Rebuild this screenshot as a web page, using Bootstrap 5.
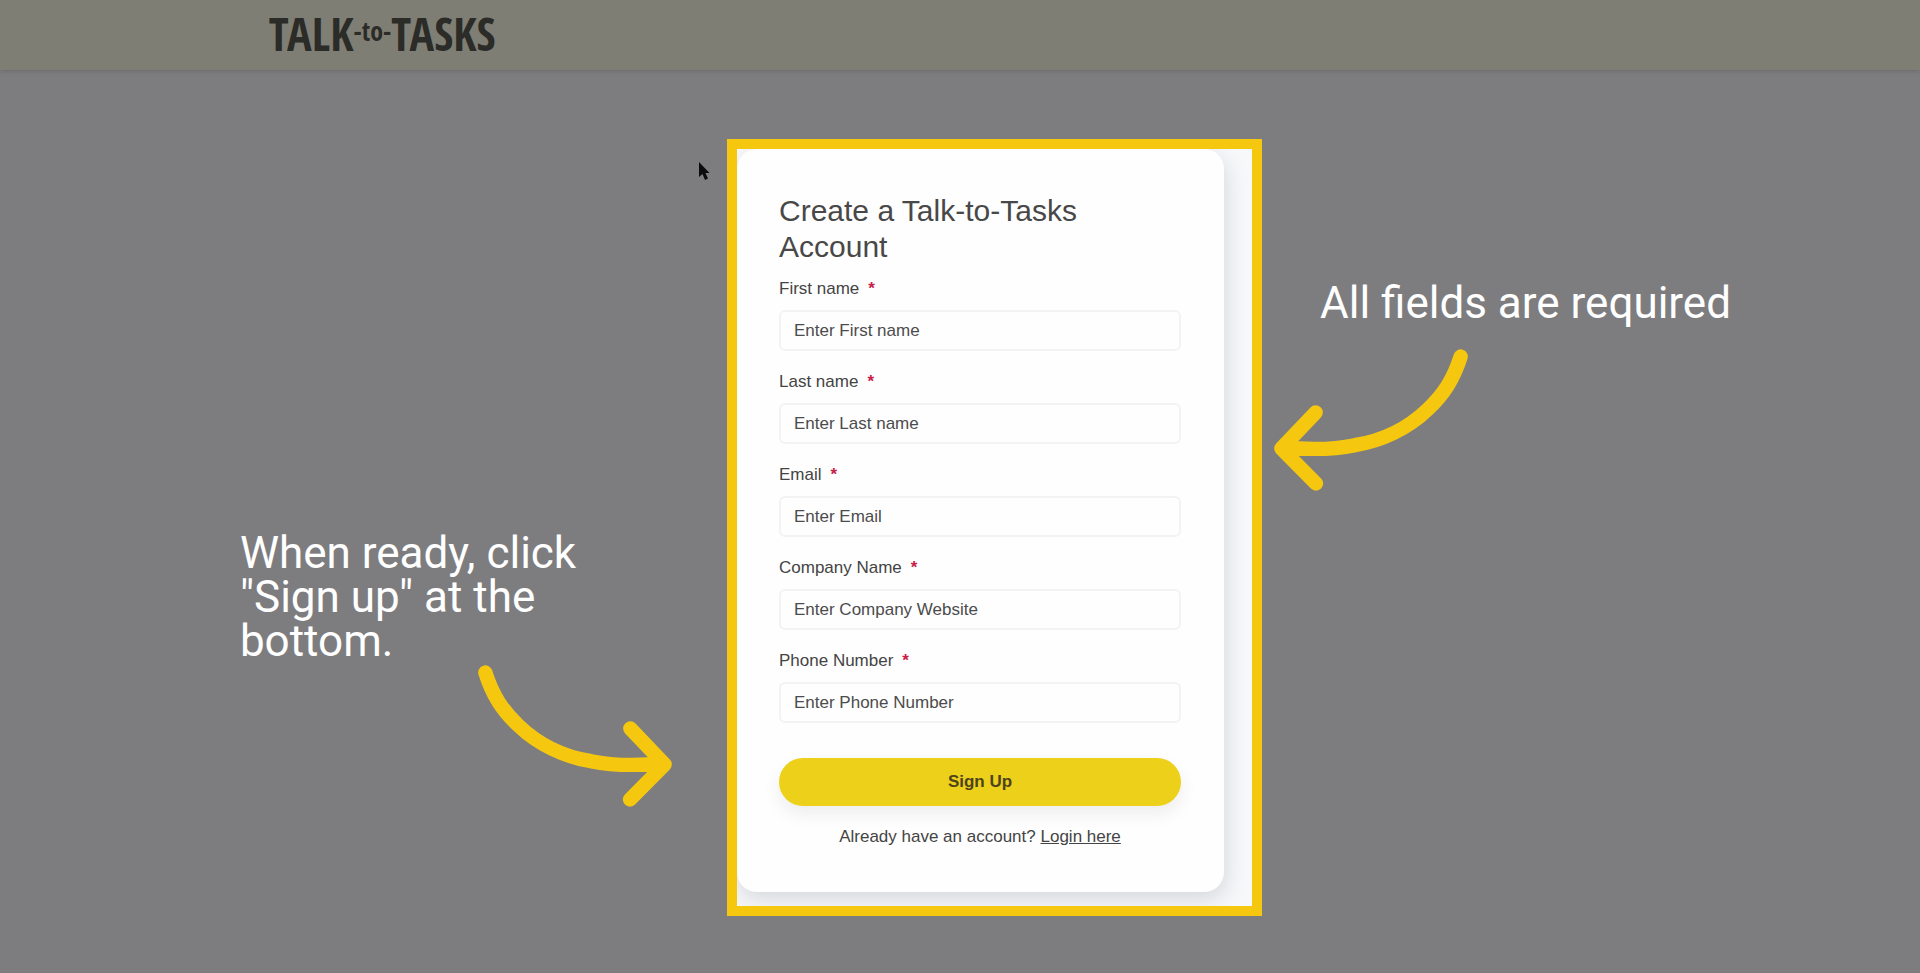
<!DOCTYPE html>
<html lang="en">
<head>
<meta charset="utf-8">
<meta name="viewport" content="width=device-width, initial-scale=1">
<title>Talk-to-Tasks – Create an account</title>
<link href="https://cdn.jsdelivr.net/npm/bootstrap@5.3.0/dist/css/bootstrap.min.css" rel="stylesheet">
<style>
  :root { --sun: #f5c80f; }
  body { background: #7d7d7f; font-family: "Liberation Sans", Arial, sans-serif; }
  .site-bar { height: 70px; padding: 0 14%; background: #7f7e74; box-shadow: 0 1px 4px rgba(90,90,90,.5); }
  .site-logo { font-family: "Open Sans Condensed", "Liberation Sans Narrow", sans-serif; font-weight: 700; font-size: 46px; line-height: 1; color: #2b2b28; }
  .site-logo:hover { color: #2b2b28; }
  .site-logo span { font-size: 26px; line-height: 1; margin-bottom: 4px; }
  .stage { display: grid; grid-template-columns: minmax(0, 727fr) 535px minmax(0, 658fr); padding: 69px 0 57px; }
  .spot { border: 10px solid var(--sun); background: #f7f8fa; padding-bottom: 14px; overflow: hidden; }
  .signup { width: 487px; padding: 44px 43px 42px 42px; background: #fefefe; border: 0; border-radius: 20px; box-shadow: 2px 8px 22px rgba(30,30,50,.14); color: #444; }
  .signup h1 { font-size: 30px; line-height: 36px; font-weight: 400; margin-bottom: 11px; color: #484848; }
  .signup label, .signup p { font-size: 17px; line-height: 26px; }
  .signup label { margin-bottom: 8px; }
  .signup .star { color: #c92048; margin-left: 9px; font-weight: 700; }
  .signup .form-control { height: 41px; padding: 0 13px; font-size: 17px; border: 2px solid #f3f3f3; border-radius: 6px; background: #fefefe; }
  .signup .form-control::placeholder { color: #4c4c4c; opacity: 1; }
  .fields { display: grid; gap: 18px; margin-bottom: 35px; }
  .btn-sun { height: 48px; padding: 0; font-size: 17px; font-weight: 700; color: #4d431c; background: #edd01a; border: 0; box-shadow: 0 8px 18px rgba(0,0,0,.07); margin-bottom: 18px; }
  .signup a { color: #444; }
  .note { font-family: Roboto, sans-serif; font-size: 44px; line-height: 44px; color: #fff; }
  .note-left { padding: 392px 55px 0 33%; }
  .note-left .note { margin-bottom: 2px; }
  .note-right { padding: 142px 0 0 12px; }
  .note-right .note { padding-left: 46px; margin-bottom: 24px; }
  .arrow { width: 194px; height: 142px; fill: none; stroke: var(--sun); stroke-width: 43; stroke-linecap: round; stroke-linejoin: round; }
  .pointer { top: 21px; right: 16px; width: 14px; height: 22px; }
</style>
</head>
<body class="min-vh-100">
<header class="site-bar d-flex align-items-center"><a class="site-logo d-flex align-items-center text-decoration-none pb-1" href="#">TALK<span>-to-</span>TASKS</a></header>
<main class="stage">
  <aside class="note-left position-relative d-flex flex-column">
    <svg class="pointer position-absolute" viewBox="0 0 14 22" aria-hidden="true"><path d="M2 2V17L5.500 14L8 20L11 18.500L8.500 13H12.500Z" fill="#0c0c0c"/></svg>
    <p class="note">When ready, click<br>"Sign up" at the<br>bottom.</p>
    <svg class="arrow align-self-end" viewBox="0 0 582 425" aria-hidden="true"><path d="M22 22C44 92 74 136 120 180C182 240 262 276 339 288C392 299 452 301 509 298M457 190L560 298L456 403"/></svg>
  </aside>
  <section class="spot">
    <form class="signup card">
      <h1>Create a Talk-to-Tasks Account</h1>
      <div class="fields">
        <div><label class="d-block" for="first">First name<span class="star">*</span></label><input class="form-control" id="first" type="text" placeholder="Enter First name"></div>
        <div><label class="d-block" for="last">Last name<span class="star">*</span></label><input class="form-control" id="last" type="text" placeholder="Enter Last name"></div>
        <div><label class="d-block" for="email">Email<span class="star">*</span></label><input class="form-control" id="email" type="email" placeholder="Enter Email"></div>
        <div><label class="d-block" for="company">Company Name<span class="star">*</span></label><input class="form-control" id="company" type="text" placeholder="Enter Company Website"></div>
        <div><label class="d-block" for="phone">Phone Number<span class="star">*</span></label><input class="form-control" id="phone" type="tel" placeholder="Enter Phone Number"></div>
      </div>
      <button class="btn btn-sun rounded-pill w-100" type="submit">Sign Up</button>
      <p class="text-center mb-0">Already have an account? <a href="#">Login here</a></p>
    </form>
  </section>
  <aside class="note-right">
    <p class="note">All fields are required</p>
    <svg class="arrow" viewBox="0 0 582 425" aria-hidden="true"><path d="M560 22C538 92 508 136 462 180C400 240 320 276 243 288C190 299 130 301 73 298M125 190L22 298L126 403"/></svg>
  </aside>
</main>
<script src="https://cdn.jsdelivr.net/npm/bootstrap@5.3.0/dist/js/bootstrap.bundle.min.js"></script>
</body>
</html>
